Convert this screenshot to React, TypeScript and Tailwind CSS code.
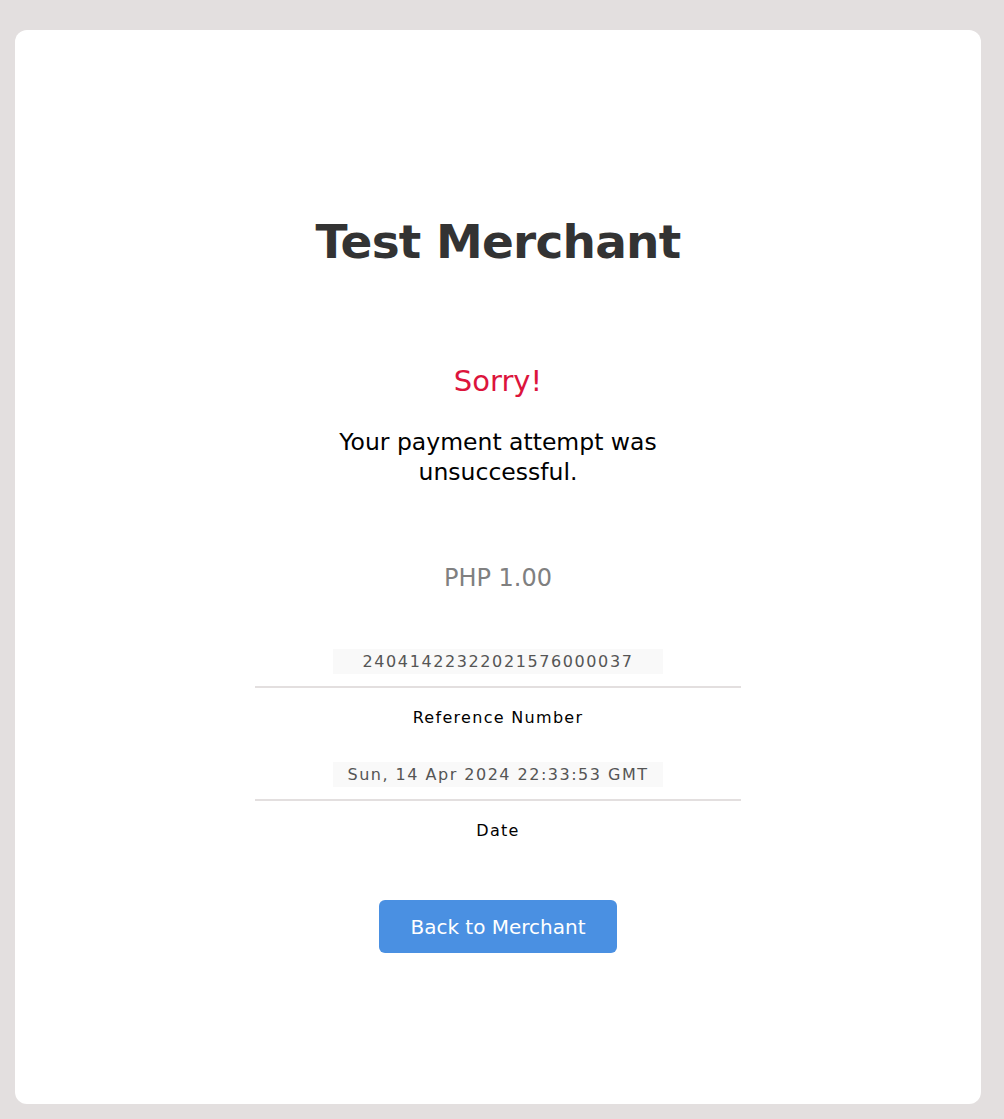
export default function App() {
  return (
    <div className="min-h-[1119px] bg-[#e3dfdf] pt-[30px] pb-[15px] pl-[15px] pr-[23px] font-['DejaVu_Sans',Verdana,sans-serif]">
      <div className="flex h-[1074px] w-[966px] flex-col items-center rounded-[12px] bg-white text-center">
        <h1 className="mt-[182px] text-[47px] font-bold leading-[60px] tracking-[-0.8px] text-[#333333]">Test Merchant</h1>

        <p className="mt-[92px] text-[29px] leading-[34px] text-[#dc143c]">Sorry!</p>
        <p className="mt-[29px] w-[340px] text-[23.5px] leading-[30px] text-black">
          Your payment attempt was unsuccessful.
        </p>

        <p className="mt-[76px] text-[24px] leading-[30px] text-[#808080]">PHP 1.00</p>

        <div className="mt-[56px] w-[486px]">
          <div className="mx-auto w-[330px] bg-[#f9f9f9] text-[16px] leading-[25px] tracking-[1.6px] text-[#555555]">
            24041422322021576000037
          </div>
          <div className="mt-[12px] h-[2px] bg-[#e3dfdf]" />
          <p className="mt-[20px] text-[16px] leading-[20px] tracking-[1.3px] text-black">Reference Number</p>
        </div>

        <div className="mt-[34px] w-[486px]">
          <div className="mx-auto w-[330px] bg-[#f9f9f9] text-[16px] leading-[25px] tracking-[1.5px] text-[#555555]">
            Sun, 14 Apr 2024 22:33:53 GMT
          </div>
          <div className="mt-[12px] h-[2px] bg-[#e3dfdf]" />
          <p className="mt-[20px] text-[16px] leading-[20px] tracking-[1.3px] text-black">Date</p>
        </div>

        <button className="mt-[59px] h-[53px] w-[238px] rounded-[6px] bg-[#4a90e2] text-[20px] text-white">
          Back to Merchant
        </button>
      </div>
    </div>
  );
}
